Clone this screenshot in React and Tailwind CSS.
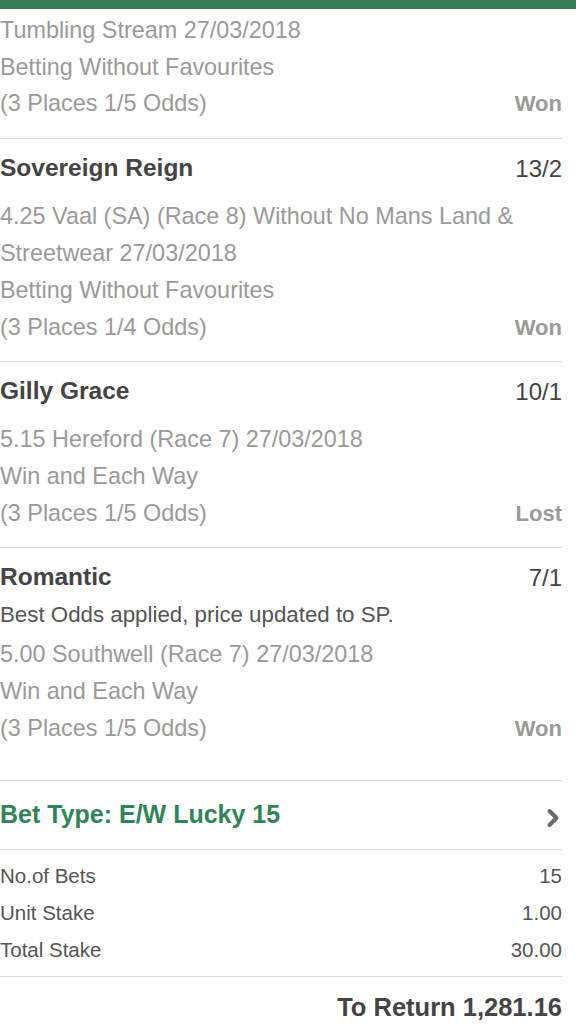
const legs = [
  {
    name: 'Sovereign Reign',
    odds: '13/2',
    lines: [
      '4.25 Vaal (SA) (Race 8) Without No Mans Land &',
      'Streetwear 27/03/2018',
      'Betting Without Favourites',
      '(3 Places 1/4 Odds)',
    ],
    result: 'Won',
  },
  {
    name: 'Gilly Grace',
    odds: '10/1',
    lines: ['5.15 Hereford (Race 7) 27/03/2018', 'Win and Each Way', '(3 Places 1/5 Odds)'],
    result: 'Lost',
  },
  {
    name: 'Romantic',
    odds: '7/1',
    note: 'Best Odds applied, price updated to SP.',
    lines: ['5.00 Southwell (Race 7) 27/03/2018', 'Win and Each Way', '(3 Places 1/5 Odds)'],
    result: 'Won',
  },
]

function DetailLines({ lines, result }) {
  return (
    <div>
      {lines.map((line, i) => (
        <div key={i} className="flex h-[37px] items-center justify-between">
          <span className="text-[23.4px] text-[#9a9a9a]">{line}</span>
          {i === lines.length - 1 && (
            <span className="text-[22px] font-bold text-[#9a9a9a]">{result}</span>
          )}
        </div>
      ))}
    </div>
  )
}

function Leg({ leg, last }) {
  return (
    <div className={`border-b border-[#dcdcdc] pt-[11px] ${last ? 'pb-[33px]' : 'pb-[15px]'}`}>
      <div className="flex h-[37px] items-center justify-between">
        <span className="text-[24.5px] font-bold text-[#444]">{leg.name}</span>
        <span className="text-[24px] text-[#444]">{leg.odds}</span>
      </div>
      {leg.note ? (
        <>
          <div className="flex h-[37px] items-center text-[22.3px] text-[#555]">{leg.note}</div>
          <div className="mt-[3px]">
            <DetailLines lines={leg.lines} result={leg.result} />
          </div>
        </>
      ) : (
        <div className="mt-[11px]">
          <DetailLines lines={leg.lines} result={leg.result} />
        </div>
      )}
    </div>
  )
}

export default function App() {
  return (
    <div className="min-h-[1024px] bg-white font-['Liberation_Sans',Arial,sans-serif]">
      <div className="h-[9px] bg-[#3a7d5b]" />

      <div className="mr-[14px]">
        {/* previous leg, cut off at the top */}
        <div className="border-b border-[#dcdcdc] pt-[3px] pb-[17px]">
          <div className="flex h-[37px] items-center text-[23.4px] text-[#9a9a9a]">
            Tumbling Stream 27/03/2018
          </div>
          <div className="flex h-[37px] items-center text-[23.4px] text-[#9a9a9a]">
            Betting Without Favourites
          </div>
          <div className="flex h-[35px] items-center justify-between">
            <span className="text-[23.4px] text-[#9a9a9a]">(3 Places 1/5 Odds)</span>
            <span className="text-[22px] font-bold text-[#9a9a9a]">Won</span>
          </div>
        </div>

        {legs.map((leg, i) => (
          <Leg key={leg.name} leg={leg} last={i === legs.length - 1} />
        ))}

        <div className="flex h-[69px] items-center justify-between border-b border-[#dcdcdc]">
          <span className="text-[25px] font-bold text-[#2f8558]">Bet Type: E/W Lucky 15</span>
          <svg className="mr-[2px] mt-[6px] h-[22px] w-[14px]" viewBox="0 0 14 22" fill="none">
            <path d="M3.5 4l7 7-7 7" stroke="#6a6a6a" strokeWidth="4" strokeLinecap="round" strokeLinejoin="round" />
          </svg>
        </div>

        <div className="border-b border-[#dcdcdc] pt-[8px] pb-[7px] text-[20.5px] text-[#555]">
          <div className="flex h-[37px] items-center justify-between">
            <span>No.of Bets</span>
            <span>15</span>
          </div>
          <div className="flex h-[37px] items-center justify-between">
            <span>Unit Stake</span>
            <span>1.00</span>
          </div>
          <div className="flex h-[37px] items-center justify-between">
            <span>Total Stake</span>
            <span>30.00</span>
          </div>
        </div>

        <div className="flex h-[60px] items-center justify-end">
          <span className="text-[25.5px] font-bold text-[#444]">To Return 1,281.16</span>
        </div>
      </div>
    </div>
  )
}
